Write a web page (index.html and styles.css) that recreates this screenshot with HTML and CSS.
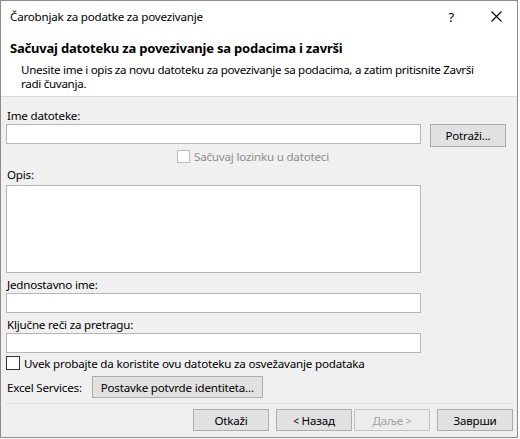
FILE: index.html
```html
<!DOCTYPE html>
<html>
<head>
  <meta http-equiv="Content-Type" content="text/html; charset=utf-8">
  <title>Čarobnjak za podatke za povezivanje</title>
  <link rel="stylesheet" href="styles.css">
</head>
<body>
  <div class="window">
    <div class="titlebar">
      <span class="title">Čarobnjak za podatke za povezivanje</span>
      <span class="help">?</span>
      <svg class="close" width="11" height="11" viewBox="0 0 11 11">
        <path d="M0.5 0.5 L10.5 10.5 M10.5 0.5 L0.5 10.5" stroke="#000" stroke-width="1.1" fill="none"/>
      </svg>
    </div>
    <div class="header">
      <h1>Sačuvaj datoteku za povezivanje sa podacima i završi</h1>
      <p>Unesite ime i opis za novu datoteku za povezivanje sa podacima, a zatim pritisnite Završi radi čuvanja.</p>
    </div>
    <div class="content">
      <div class="label first">Ime datoteke:</div>
      <div class="row-input">
        <div class="field"></div>
        <div class="btn browse">Potraži...</div>
      </div>
      <div class="check-row center disabled">
        <span class="box"></span>
        <span>Sačuvaj lozinku u datoteci</span>
      </div>
      <div class="label">Opis:</div>
      <div class="field area"></div>
      <div class="label">Jednostavno ime:</div>
      <div class="field"></div>
      <div class="label">Ključne reči za pretragu:</div>
      <div class="field"></div>
      <div class="check-row">
        <span class="box"></span>
        <span>Uvek probajte da koristite ovu datoteku za osvežavanje podataka</span>
      </div>
      <div class="services">
        <span>Excel Services:</span>
        <div class="btn auth">Postavke potvrde identiteta...</div>
      </div>
    </div>
    <div class="footer">
      <div class="btn">Otkaži</div>
      <div class="btn back"><span><span class="arrow">&lt;</span> Назад</span></div>
      <div class="btn off"><span>Даље <span class="arrow">&gt;</span></span></div>
      <div class="btn">Заврши</div>
    </div>
  </div>
</body>
</html>
```

FILE: styles.css
```css
html,
body,
div,
span,
h1,
p {
  margin: 0;
  padding: 0;
  border: 0;
}

body {
  font-family: 'Noto Sans', 'Open Sans', sans-serif;
  font-size: 11.6px;
  letter-spacing: -0.2px;
  color: #000;
  background: #fff;
}

.window {
  width: 518px;
  height: 438px;
  box-sizing: border-box;
  border: 1px solid #8c8c8c;
  background: #f0f0f0;
  display: flex;
  flex-direction: column;
}

/* title bar */
.titlebar {
  height: 31px;
  background: #fff;
  display: flex;
  align-items: center;
  padding-left: 9px;
}
.title {
  flex: 1;
}
.help {
  font-size: 13px;
  margin-right: 37px;
}
.close {
  margin-right: 15px;
}

/* header */
.header {
  background: #fff;
  border-bottom: 1px solid #dcdcdc;
  padding: 6px 0 0 9px;
  height: 58px;
}
.header h1 {
  font-size: 13px;
  font-weight: bold;
  line-height: 20px;
}
.header p {
  margin-top: 5px;
  padding-left: 11px;
  width: 462px;
  line-height: 14px;
  letter-spacing: -0.3px;
}

/* form */
.content {
  padding: 0 0 0 5px;
  flex: 1;
}
.label {
  margin-top: 3px;
  padding-left: 1px;
  line-height: 18px;
  height: 16px;
}
.label.first {
  margin-top: 10px;
}
.field {
  margin-top: 1px;
  width: 415px;
  height: 20px;
  box-sizing: border-box;
  background: #fff;
  border: 1px solid #b7b7b7;
}
.field.area {
  margin-top: 3px;
  height: 88px;
}
.row-input {
  display: flex;
  align-items: flex-start;
  gap: 9px;
}
.btn {
  height: 22px;
  width: 76px;
  box-sizing: border-box;
  border: 1px solid #adadad;
  background: #e1e1e1;
  display: flex;
  align-items: center;
  justify-content: center;
}
.btn.browse {
  margin-top: 1px;
  height: 23px;
}
.arrow {
  font-size: 10px;
}
.check-row {
  display: flex;
  align-items: center;
  gap: 4px;
  margin-top: 3px;
  height: 14px;
}
.check-row.center {
  margin-top: 2px;
  padding-left: 171px;
}
.box {
  width: 14px;
  height: 14px;
  box-sizing: border-box;
  border: 1px solid #333;
  background: #fff;
}
.disabled {
  color: #8d8d8d;
}
.disabled .box {
  width: 13px;
  height: 13px;
  border-color: #bcbcbc;
}
.services {
  display: flex;
  align-items: center;
  gap: 10px;
  margin-top: 6px;
  padding-left: 1px;
}
.btn.auth {
  width: 171px;
}

/* footer */
.footer {
  margin: 0 4px 0 5px;
  border-top: 1px solid #dfdfdf;
  padding: 5px 0 6px;
  display: flex;
  justify-content: flex-end;
  gap: 7px;
}
.btn.back {
  margin-right: -5px;
}
.btn.off {
  border-color: #c4c4c4;
  background: #ececec;
  color: #a2a2a2;
}
```
